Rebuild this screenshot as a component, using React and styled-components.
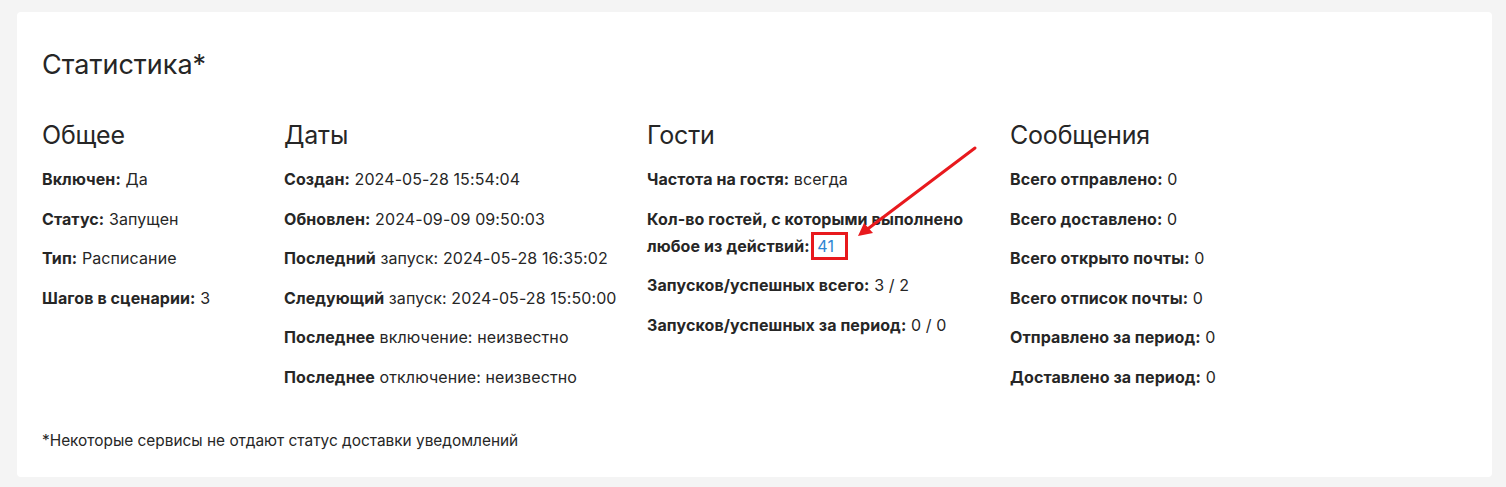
import React from 'react'
import styled, {createGlobalStyle} from 'styled-components'

const GlobalStyle = createGlobalStyle`
  html, body {
    margin: 0;
    padding: 0;
    background: #f4f4f4;
  }
  body {
    font-family: 'Inter', 'Noto Sans', sans-serif;
    color: #262626;
  }
`

const Page = styled.div`
  padding: 12px 14px 10px 17px;
`

const Card = styled.section`
  background: #fff;
  border-radius: 4px;
  padding: 37px 25px 23px 25px;
`

const Title = styled.h1`
  margin: 0 0 39px;
  font-size: 27px;
  line-height: 32px;
  font-weight: 400;
`

const Columns = styled.div`
  display: grid;
  grid-template-columns: 242px 363px 363px 1fr;
`

const Column = styled.div`
  display: flex;
  flex-direction: column;
  max-width: ${(props) => props.maxWidth || 'none'};
`

const ColumnTitle = styled.h2`
  margin: 0 0 16px;
  font-size: 25px;
  line-height: 30px;
  font-weight: 400;
  letter-spacing: -0.2px;
`

const Row = styled.div`
  font-size: 16px;
  line-height: 27px;
  margin-bottom: 12.5px;
  letter-spacing: 0.1px;

  b {
    font-weight: 700;
  }
`

const Link = styled.a`
  color: #2f86d3;
  text-decoration: none;
`

const Marked = styled.span`
  position: relative;
  display: inline-block;
  margin-left: -3px;
  padding-left: 6px;
`

const MarkBox = styled.span`
  position: absolute;
  left: 0;
  top: -1px;
  width: 37px;
  height: 28px;
  box-sizing: border-box;
  border: 3px solid #e8191d;
  pointer-events: none;
`

const Arrow = styled.svg`
  position: absolute;
  left: 42px;
  top: -88px;
  overflow: visible;
  pointer-events: none;
`

const Footnote = styled.p`
  margin: 24px 0 0;
  font-size: 15.4px;
  line-height: 27px;
`

const Item = ({label, value, rest}) => (
  <Row>
    <b>{label}</b>
    {rest ? ` ${rest}: ` : ' '}
    {value}
  </Row>
)

const App = () => {
  return (
    <Page>
      <GlobalStyle />
      <Card>
        <Title>Статистика*</Title>
        <Columns>
          <Column>
            <ColumnTitle>Общее</ColumnTitle>
            <Item label="Включен:" value="Да" />
            <Item label="Статус:" value="Запущен" />
            <Item label="Тип:" value="Расписание" />
            <Item label="Шагов в сценарии:" value="3" />
          </Column>
          <Column>
            <ColumnTitle>Даты</ColumnTitle>
            <Item label="Создан:" value="2024-05-28 15:54:04" />
            <Item label="Обновлен:" value="2024-09-09 09:50:03" />
            <Item label="Последний" rest="запуск" value="2024-05-28 16:35:02" />
            <Item label="Следующий" rest="запуск" value="2024-05-28 15:50:00" />
            <Item label="Последнее" rest="включение" value="неизвестно" />
            <Item label="Последнее" rest="отключение" value="неизвестно" />
          </Column>
          <Column maxWidth="345px">
            <ColumnTitle>Гости</ColumnTitle>
            <Item label="Частота на гостя:" value="всегда" />
            <Row>
              <b>Кол-во гостей, с которыми выполнено любое из действий:</b>{' '}
              <Marked>
                <Link href="#">41</Link>
                <MarkBox />
                <Arrow width="130" height="95" viewBox="0 0 130 95">
                  <line x1="122" y1="3" x2="12" y2="86" stroke="#e8191d" strokeWidth="3" strokeLinecap="round" />
                  <polygon points="5,91 11,78 20,88" fill="#e8191d" />
                </Arrow>
              </Marked>
            </Row>
            <Item label="Запусков/успешных всего:" value="3 / 2" />
            <Item label="Запусков/успешных за период:" value="0 / 0" />
          </Column>
          <Column>
            <ColumnTitle>Сообщения</ColumnTitle>
            <Item label="Всего отправлено:" value="0" />
            <Item label="Всего доставлено:" value="0" />
            <Item label="Всего открыто почты:" value="0" />
            <Item label="Всего отписок почты:" value="0" />
            <Item label="Отправлено за период:" value="0" />
            <Item label="Доставлено за период:" value="0" />
          </Column>
        </Columns>
        <Footnote>*Некоторые сервисы не отдают статус доставки уведомлений</Footnote>
      </Card>
    </Page>
  )
}

export default App
